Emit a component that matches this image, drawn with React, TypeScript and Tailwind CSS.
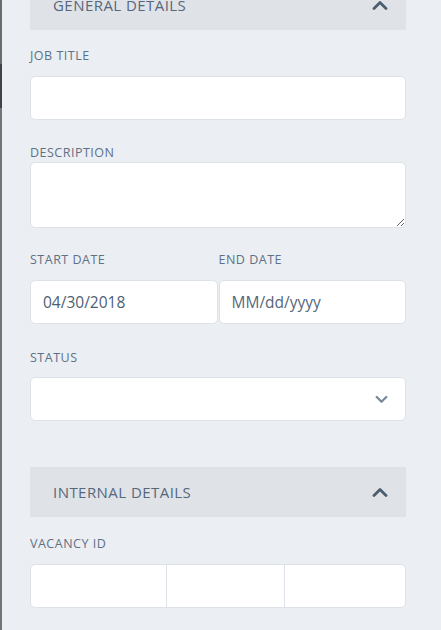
import React from 'react';

const font = { fontFamily: '"Open Sans", "Liberation Sans", sans-serif' };

const Chevron: React.FC<{ up?: boolean; className?: string }> = ({ up, className }) => (
  <svg className={className} viewBox="0 0 16 10" fill="none" stroke="currentColor" strokeWidth={2.8} strokeLinecap="round" strokeLinejoin="round">
    {up ? <path d="M2 8.5 8 2.5l6 6" /> : <path d="M2 2.5l6 6 6-6" />}
  </svg>
);

const SectionHeader: React.FC<{ title: string; className?: string }> = ({ title, className = '' }) => (
  <div className={`flex h-[50px] shrink-0 items-center justify-between bg-[#dfe2e7] pl-[23px] pr-[18px] ${className}`}>
    <span className="text-[15px] tracking-[0.03em] text-[#56687c]">{title}</span>
    <Chevron up className="h-[10px] w-[16px] text-[#4d5d6e]" />
  </div>
);

const Label: React.FC<{ children: React.ReactNode; className?: string }> = ({ children, className = '' }) => (
  <div className={`text-[12.5px] leading-[16px] tracking-[0.04em] text-[#5f7185] ${className}`}>{children}</div>
);

const fieldBox = 'rounded-[5px] border border-[#dde2e9] bg-white';

export default function App() {
  return (
    <div className="flex h-[630px] w-[441px] overflow-hidden bg-[#ebeef3]" style={font}>
      {/* window edge */}
      <div className="flex w-[2px] shrink-0 flex-col">
        <div className="h-[64px] bg-[#6b6b6b]" />
        <div className="h-[44px] bg-[#3f4246]" />
        <div className="flex-1 bg-[#747474]" />
      </div>

      <div className="ml-[28px] flex w-[376px] flex-col">
        <SectionHeader title="GENERAL DETAILS" className="-mt-5" />

        <Label className="mb-[12px] mt-[18px]">JOB TITLE</Label>
        <input className={`h-[44px] w-full px-3 text-[15px] outline-none ${fieldBox}`} />

        <Label className="mb-[1px] mt-[25px]">DESCRIPTION</Label>
        <textarea className={`h-[66px] w-full px-3 py-2 text-[15px] outline-none ${fieldBox}`} />

        <div className="mt-[24px] grid grid-cols-2 gap-px">
          <div className="flex flex-col">
            <Label className="mb-[12px]">START DATE</Label>
            <input
              defaultValue="04/30/2018"
              className={`h-[44px] w-full px-3 text-[15.5px] text-[#4e5f72] outline-none ${fieldBox}`}
            />
          </div>
          <div className="flex flex-col">
            <Label className="mb-[12px]">END DATE</Label>
            <input
              placeholder="MM/dd/yyyy"
              className={`h-[44px] w-full px-3 text-[15.5px] text-[#4e5f72] outline-none placeholder:text-[#56677a] ${fieldBox}`}
            />
          </div>
        </div>

        <Label className="mb-[11px] mt-[26px]">STATUS</Label>
        <div className={`flex h-[44px] items-center justify-end pr-[17px] ${fieldBox}`}>
          <Chevron className="h-[8px] w-[13px] text-[#7a8796]" />
        </div>

        <SectionHeader title="INTERNAL DETAILS" className="mt-[46px]" />

        <Label className="mb-[12px] mt-[19px]">VACANCY ID</Label>
        <div className={`flex h-[44px] overflow-hidden ${fieldBox}`}>
          <div className="w-[136px] border-r border-[#dde2e9]" />
          <div className="w-[118px] border-r border-[#dde2e9]" />
          <div className="flex-1" />
        </div>
      </div>
    </div>
  );
}
